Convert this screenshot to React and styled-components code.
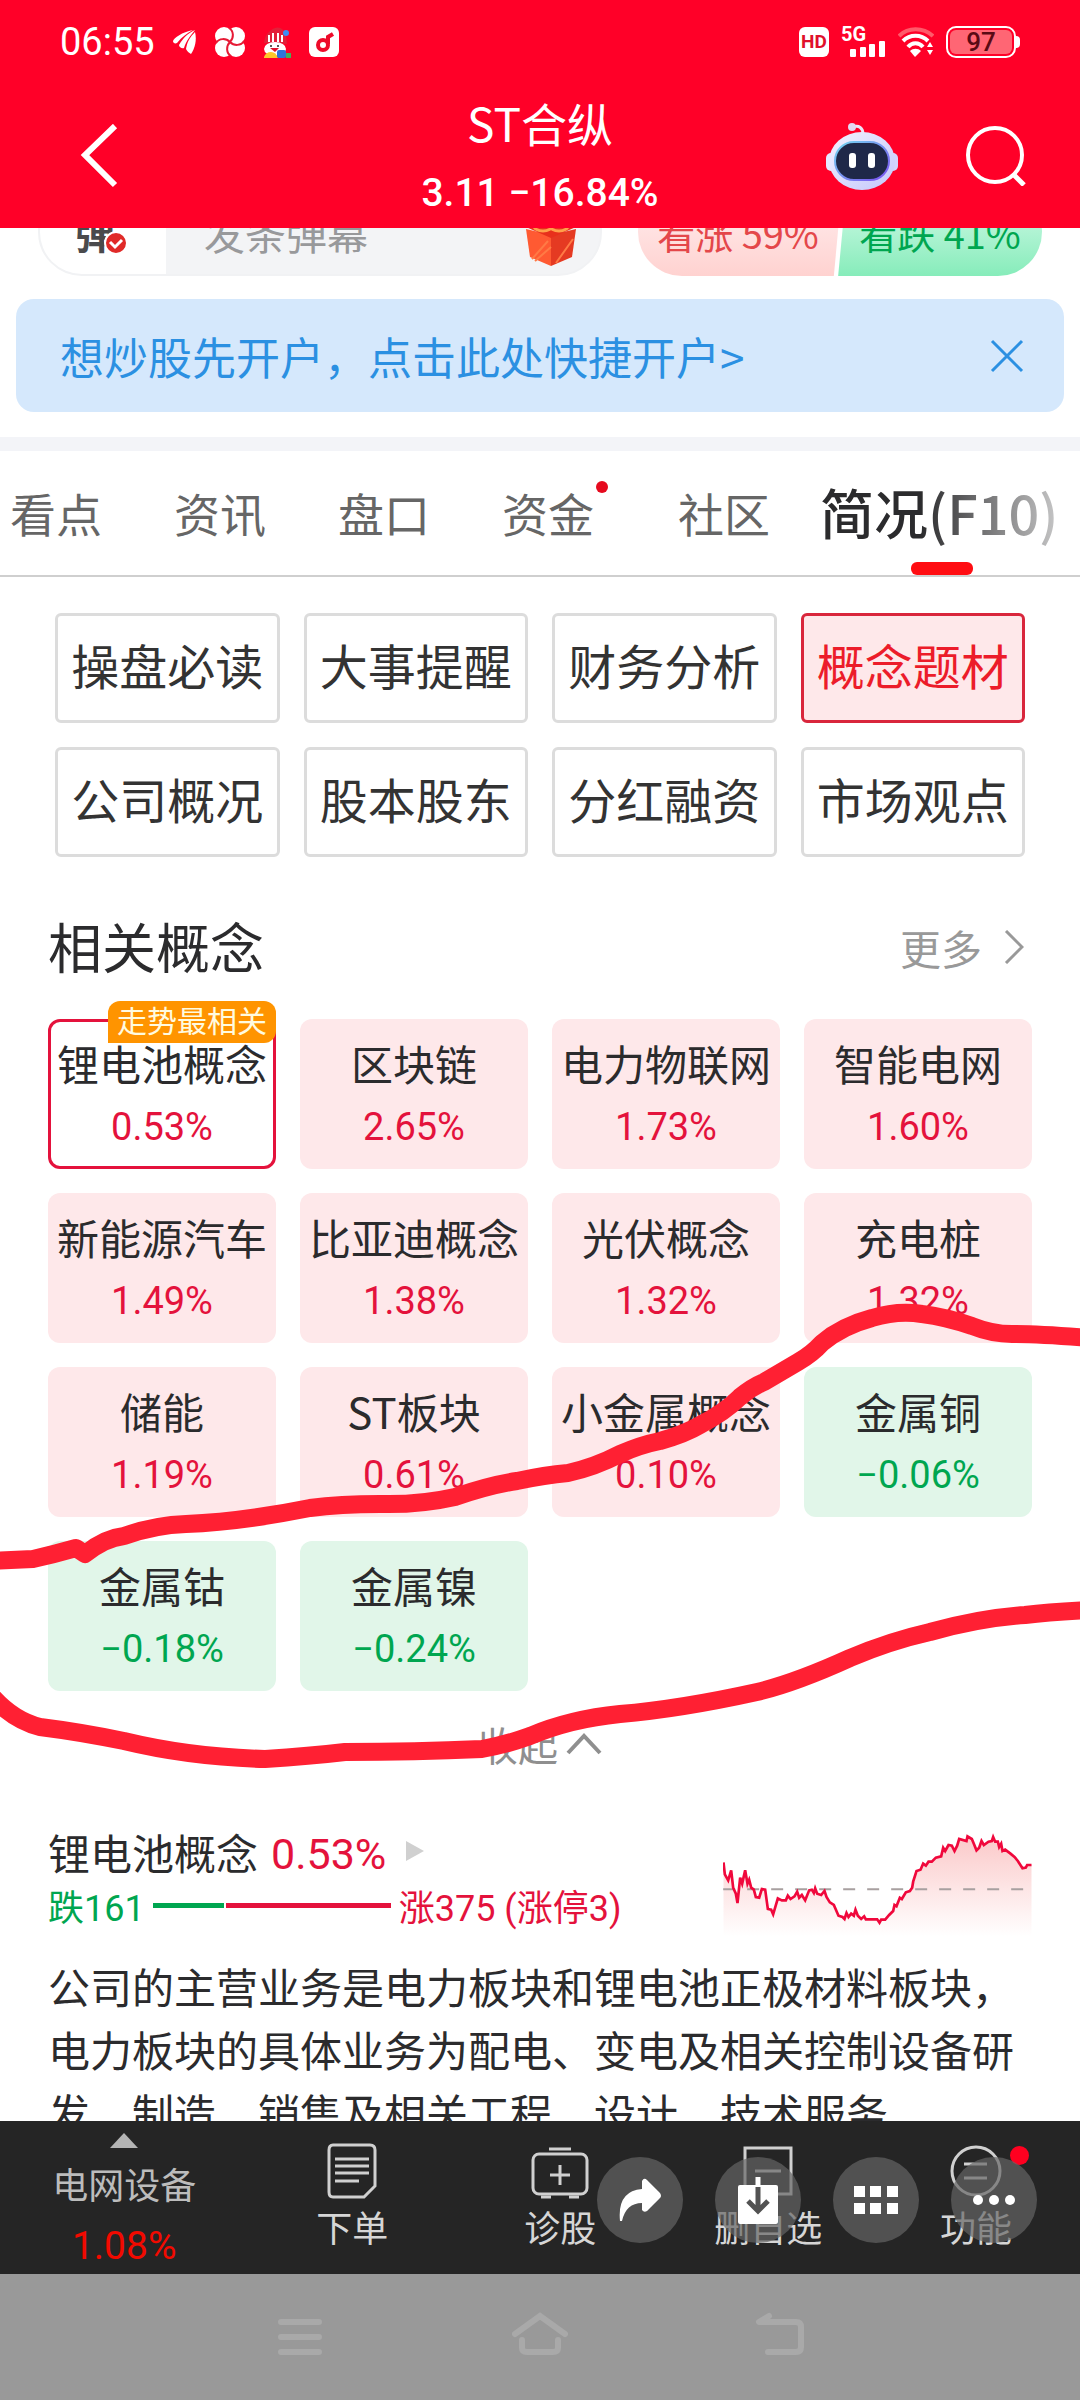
import styled, { createGlobalStyle, css } from "styled-components";

const GlobalStyle = createGlobalStyle`
  * {
    box-sizing: border-box;
  }

  body {
    margin: 0;
    background: #fff;
    color: #2b2b2d;
    font-family: "Noto Sans CJK SC", sans-serif;
  }

  button,
  input {
    margin: 0;
    padding: 0;
    border: 0;
    background: none;
    color: inherit;
    font: inherit;
  }

  a {
    color: inherit;
    text-decoration: none;
  }

  h1, h2, h3, p {
    margin: 0;
    font-weight: 400;
  }

  svg {
    display: block;
    flex: none;
  }
`;

const RED = "#e4123c";
const GREEN = "#00a650";

const Page = styled.div`
  display: flex;
  flex-direction: column;
  height: 100vh;
  overflow: hidden;
`;

/* ---------- header ---------- */

const Header = styled.header`
  flex: none;
  background: #ff0028;
  color: #fff;
`;

const StatusBar = styled.div`
  display: flex;
  align-items: center;
  justify-content: space-between;
  height: 84px;
  padding: 0 60px;

  .group {
    display: flex;
    align-items: center;
  }

  .left {
    gap: 18px;
  }

  .right {
    gap: 12px;
  }

  .time {
    font-family: Roboto, sans-serif;
    font-size: 38px;
    line-height: 40px;
  }

  .hd {
    width: 30px;
    height: 30px;
    border-radius: 6px;
    background: #fff;
    color: #e0102c;
    font: 700 19px/30px Roboto, sans-serif;
    text-align: center;
  }

  .signal {
    display: flex;
    flex-direction: column;
    width: 45px;
    height: 30px;
    font: 700 20px/14px Roboto, sans-serif;

    svg {
      align-self: flex-end;
    }
  }
`;

const Battery = styled.div`
  display: flex;
  align-items: center;

  .body {
    width: 70px;
    height: 32px;
    padding: 2px;
    border: 2px solid #fff;
    border-radius: 10px;
  }

  .level {
    height: 24px;
    border-radius: 6px;
    background: #ff6674;
    color: #5a0a14;
    font: 500 26px/24px Roboto, sans-serif;
    text-align: center;
  }

  .cap {
    width: 4px;
    height: 12px;
    border-radius: 0 4px 4px 0;
    background: #fff;
  }
`;

const TitleBar = styled.div`
  display: grid;
  grid-template-columns: 1fr auto 1fr;
  align-items: center;
  height: 144px;
  padding: 0 54px;

  button {
    display: block;
  }

  .back {
    padding-left: 26px;
  }

  .title {
    padding-top: 2px;
    text-align: center;
  }

  h1 {
    font-size: 46px;
    line-height: 72px;
  }

  .price {
    font-family: Roboto, sans-serif;
    font-weight: 500;
    font-size: 39px;
    line-height: 70px;
  }

  .actions {
    display: flex;
    justify-content: flex-end;
    align-items: center;
    gap: 68px;
  }
`;

/* ---------- scrolled content ---------- */

const Main = styled.main`
  position: relative;
  flex: 1;
  min-height: 0;
  overflow: hidden;
`;

const BulletRow = styled.div`
  display: flex;
  justify-content: space-between;
  height: 88px;
  margin-top: -40px;
  padding: 0 38px;
`;

const BulletBox = styled.div`
  display: flex;
  align-items: center;
  width: 564px;
  border: 2px solid #f1f2f4;
  border-radius: 44px;
  background: #f3f4f6;
  overflow: hidden;

  .switch {
    position: relative;
    width: 126px;
    height: 100%;
    padding-right: 16px;
    background: #fff;
    color: #4a4a4c;
    font-size: 40px;
    font-weight: 700;
  }

  .switch svg {
    position: absolute;
    left: 64px;
    bottom: 19px;
  }

  input {
    flex: 1;
    min-width: 0;
    padding-left: 38px;
    font-size: 41px;

    &::placeholder {
      color: #98999b;
      opacity: 1;
    }
  }

  .gift {
    margin-right: 24px;
  }
`;

const VoteBox = styled.div`
  display: flex;
  width: 404px;
  border-radius: 44px;
  overflow: hidden;
`;

const Vote = styled.button`
  width: 204px;
  padding-right: 4px;
  font-size: 38px;
  color: #e4474a;
  background: linear-gradient(#ffe4e4 40%, #ffd2d0);
  clip-path: polygon(0 0, 100% 0, 96% 100%, 0 100%);

  ${({ $down }) =>
    $down &&
    css`
      width: 208px;
      margin-left: -8px;
      padding: 0 0 0 4px;
      color: ${GREEN};
      background: linear-gradient(#b8f5d8 40%, #86ecba);
      clip-path: polygon(6% 0, 100% 0, 100% 100%, 2% 100%);
    `}
`;

const Banner = styled.div`
  display: flex;
  align-items: center;
  justify-content: space-between;
  height: 113px;
  margin: 23px 16px 25px;
  padding: 0 40px 0 44px;
  border-radius: 18px;
  background: #d5e8fc;
  color: #2b90e2;
  font-size: 44px;
`;

const Divider = styled.div`
  height: 14px;
  background: #f3f4f8;
`;

const Tabs = styled.nav`
  position: relative;
  display: flex;
  height: 126px;
  padding-left: 10px;
  border-bottom: 2px solid #cfcfcf;
  overflow: hidden;

  /* fade that hints at more tabs to the right */
  &::after {
    content: "";
    position: absolute;
    top: 0;
    right: 0;
    bottom: 20px;
    width: 160px;
    background: linear-gradient(90deg, rgba(255, 255, 255, 0), rgba(255, 255, 255, 0.85));
    pointer-events: none;
  }
`;

const Tab = styled.button`
  position: relative;
  flex: none;
  padding-right: ${({ $dot }) => ($dot ? 84 : 72)}px;
  padding-bottom: 3px;
  color: #666;
  font-size: 46px;
  white-space: nowrap;

  ${({ $dot }) =>
    $dot &&
    css`
      &::after {
        content: "";
        position: absolute;
        top: 30px;
        right: 70px;
        width: 12px;
        height: 12px;
        border-radius: 50%;
        background: #e60a1e;
      }
    `}

  ${({ $active }) =>
    $active &&
    css`
      margin-left: -22px;
      padding-right: 0;
      color: #2b2b2d;
      font-size: 54px;
      font-weight: 500;

      &::after {
        content: "";
        position: absolute;
        left: 50%;
        bottom: 0;
        width: 62px;
        height: 13px;
        margin-left: -28px;
        border-radius: 6px;
        background: #ff0d12;
      }
    `}
`;

const SubNav = styled.div`
  display: grid;
  grid-template-columns: repeat(4, 1fr);
  gap: 24px;
  padding: 36px 55px 0;
`;

const SubNavButton = styled.button`
  height: 110px;
  padding-bottom: 8px;
  border: 3px solid ${({ $active }) => ($active ? "#d9263c" : "#dcdcdc")};
  border-radius: 6px;
  background: ${({ $active }) => ($active ? "#fee8ea" : "#fff")};
  color: ${({ $active }) => ($active ? "#ec1c2a" : "#333")};
  font-size: 48px;
  white-space: nowrap;
`;

const SectionHead = styled.div`
  display: flex;
  align-items: center;
  justify-content: space-between;
  margin: 49px 0 33px;
  padding: 0 56px 0 48px;

  h2 {
    font-size: 54px;
    line-height: 80px;
  }

  a {
    display: flex;
    align-items: center;
    gap: 22px;
    padding-top: 2px;
    color: #999;
    font-size: 41px;
  }
`;

const ConceptGrid = styled.div`
  display: grid;
  grid-template-columns: repeat(4, 1fr);
  gap: 24px;
  padding: 0 48px;
`;

const Concept = styled.a`
  position: relative;
  display: flex;
  flex-direction: column;
  align-items: center;
  justify-content: center;
  height: 150px;
  padding-top: 4px;
  border-radius: 12px;
  background: ${({ $down }) => ($down ? "#e1f6e9" : "#fee8ea")};
  white-space: nowrap;

  ${({ $selected }) =>
    $selected &&
    css`
      border: 3px solid ${RED};
      background: #fff;
    `}

  .name {
    font-size: 42px;
    line-height: 62px;
  }

  .rate {
    color: ${({ $down }) => ($down ? GREEN : RED)};
    font-family: Roboto, sans-serif;
    font-size: 38px;
    line-height: 66px;
  }

  .badge {
    position: absolute;
    top: -21px;
    right: -3px;
    padding: 0 9px 6px;
    border-radius: 12px 12px 12px 0;
    background: #ff9400;
    color: #fffbe0;
    font-size: 30px;
    line-height: 36px;
  }
`;

const Collapse = styled.button`
  display: flex;
  align-items: center;
  gap: 8px;
  height: 56px;
  margin: 25px auto 0;
  color: #8f8f8f;
  font-size: 40px;
`;

const Detail = styled.section`
  padding: 50px 48px 0;

  .head {
    display: flex;
    justify-content: space-between;
    height: 115px;
  }

  .chart {
    margin-top: 10px;
  }

  p {
    margin-top: 17px;
    font-size: 42px;
    line-height: 63px;
  }
`;

const DetailTitle = styled.div`
  display: flex;
  align-items: center;
  height: 58px;

  h3 {
    font-size: 42px;
  }

  .rate {
    margin: 0 20px 0 13px;
    padding-top: 6px;
    color: ${RED};
    font-family: Roboto, sans-serif;
    font-size: 43px;
  }
`;

const Counts = styled.div`
  display: flex;
  align-items: center;
  gap: 8px;
  height: 50px;
  color: ${RED};
  font-family: Roboto, "Noto Sans CJK SC", sans-serif;
  font-size: 36px;

  .down {
    color: ${GREEN};
  }

  .bar {
    display: flex;
    gap: 2px;
    width: 238px;
    height: 5px;
  }

  .bar i {
    background: ${RED};
  }

  .bar .fall {
    background: ${GREEN};
  }
`;

const Scribble = styled.svg`
  position: absolute;
  left: 0;
  top: 1072px;
  width: 100%;
  height: 480px;
  pointer-events: none;
`;

/* ---------- bottom ---------- */

const TabBar = styled.div`
  position: relative;
  display: flex;
  flex: none;
  height: 153px;
  background: #252525;
  color: #d6d6d6;
`;

const Sector = styled.button`
  display: flex;
  flex-direction: column;
  align-items: center;
  width: 23%;
  padding-top: 12px;
  color: #bcbcbc;
  font-size: 36px;
  line-height: 70px;

  .rate {
    color: #f20a00;
    font-family: Roboto, sans-serif;
    font-size: 39px;
    line-height: 56px;
  }
`;

const TabItem = styled.button`
  display: flex;
  flex: 1;
  flex-direction: column;
  align-items: center;
  padding-top: 22px;
  font-size: 36px;
  line-height: 54px;

  .icon {
    position: relative;
  }

  .dot {
    position: absolute;
    top: 3px;
    right: -26px;
    width: 19px;
    height: 19px;
    border-radius: 50%;
    background: #ff0020;
  }
`;

const FloatBar = styled.div`
  position: absolute;
  right: 43px;
  bottom: 31px;
  display: flex;
  gap: 32px;
`;

const FloatButton = styled.button`
  display: flex;
  align-items: center;
  justify-content: center;
  width: 86px;
  height: 86px;
  border-radius: 50%;
  background: rgba(102, 102, 102, 0.69);
`;

const SystemNav = styled.div`
  display: flex;
  flex: none;
  align-items: center;
  justify-content: center;
  gap: 184px;
  height: 126px;
  padding-bottom: 6px;
  background: #999;
`;

const subNav = [
  "操盘必读",
  "大事提醒",
  "财务分析",
  "概念题材",
  "公司概况",
  "股本股东",
  "分红融资",
  "市场观点",
];

const concepts = [
  { name: "锂电池概念", rate: "0.53%", badge: "走势最相关" },
  { name: "区块链", rate: "2.65%" },
  { name: "电力物联网", rate: "1.73%" },
  { name: "智能电网", rate: "1.60%" },
  { name: "新能源汽车", rate: "1.49%" },
  { name: "比亚迪概念", rate: "1.38%" },
  { name: "光伏概念", rate: "1.32%" },
  { name: "充电桩", rate: "1.32%" },
  { name: "储能", rate: "1.19%" },
  { name: "ST板块", rate: "0.61%" },
  { name: "小金属概念", rate: "0.10%" },
  { name: "金属铜", rate: "−0.06%", down: true },
  { name: "金属钴", rate: "−0.18%", down: true },
  { name: "金属镍", rate: "−0.24%", down: true },
];

const counts = { down: 161, up: 375, limit: 3 };

const trend =
  "M131 186L135 222L145 240L154 210L160 262L168 280L173 308L181 232L187 250L196 210L203 250L208 238L214 262L222 268L228 290L238 292L246 266L256 268L264 326L274 328L280 342L294 294L306 300L318 300L324 286L332 296L344 288L352 274L358 292L366 284L376 300L388 270L396 268L402 278L406 264L412 280L424 284L434 272L440 290L450 306L462 314L476 346L488 350L494 356L500 338L506 350L514 340L522 346L527 328L534 346L544 356L553 348L558 357L592 357L599 367L604 358L616 358L628 344L640 332L644 314L650 318L660 292L666 296L678 276L690 272L697 262L700 244L710 212L722 208L730 190L738 196L746 184L756 184L768 172L784 168L790 142L796 152L806 134L816 136L824 152L832 136L838 116L860 122L863 108L876 116L882 130L890 150L898 142L905 122L912 134L926 124L936 122L940 110L946 124L954 124L958 140L964 130L968 152L976 148L992 160L1004 170L1014 182L1028 204L1038 202L1042 194L1055 194";

const StatusIcons = () => (
  <>
    <svg width="24" height="26" viewBox="0 0 24 26" fill="#fff">
      <path d="M0 12C1 9 9 3 20 1C14 4 9 8 4 14C2 15 0 14 0 12Z" />
      <path d="M6 16C10 9 15 4 22 1C18 6 13 12 11 19C9 20 6 18 6 16Z" />
      <path d="M13 20C14 13 17 8 22 3C24 11 22 19 18 25C16 24 14 22 13 20Z" />
    </svg>
    <svg width="30" height="30" viewBox="0 0 30 30">
      <g fill="#fff">
        <circle cx="9" cy="9" r="9" />
        <circle cx="21" cy="9" r="9" />
        <circle cx="9" cy="21" r="9" />
        <circle cx="21" cy="21" r="9" />
      </g>
      <path
        d="M15 15C19 11 19 4 14 1M15 15C19 19 26 19 29 14M15 15C11 19 11 26 16 29M15 15C11 11 4 11 1 16"
        fill="none"
        stroke="#e61a35"
        strokeWidth="2"
      />
    </svg>
    <svg width="28" height="32" viewBox="0 0 28 32">
      <path d="M1 17C2 8 7 4 12 2C16 0 22 3 23 10L24 18Z" fill="#e2203a" />
      <path d="M6 9V16M10 7V16M15 7V16M19 9V16" stroke="#fff" strokeWidth="2" />
      <circle cx="23" cy="7" r="3" fill="#3d8df5" />
      <ellipse cx="12" cy="23" rx="11" ry="7" fill="#fff" />
      <circle cx="8" cy="20" r="1" fill="#222" />
      <circle cx="15" cy="20" r="1" fill="#222" />
      <path d="M7 22H16L12 26Z" fill="#e0102c" />
      <path d="M1 31Q3 26 8 26T15 32H1Z" fill="#ffc62b" />
      <rect x="14" y="24" width="9" height="8" rx="2" fill="#2f74d8" />
      <rect x="23" y="27" width="5" height="5" fill="#42b05a" />
    </svg>
    <svg width="30" height="30" viewBox="0 0 30 30">
      <rect width="30" height="30" rx="6" fill="#fff" />
      <circle cx="14" cy="18" r="5" fill="none" stroke="#ee0a2a" strokeWidth="4" />
      <path d="M19 17V10L24 7" fill="none" stroke="#ee0a2a" strokeWidth="4" />
    </svg>
  </>
);

const Robot = () => (
  <svg width="72" height="68" viewBox="0 0 72 68">
    <defs>
      <linearGradient id="shell" x1="0" y1="0" x2="1" y2="1">
        <stop offset="0" stopColor="#f4f2ff" />
        <stop offset="1" stopColor="#c3c6fb" />
      </linearGradient>
      <linearGradient id="rim" x1="0" y1="0" x2="1" y2="1">
        <stop offset="0" stopColor="#74d8f0" />
        <stop offset="1" stopColor="#7a4df0" />
      </linearGradient>
    </defs>
    <path d="M27 5C33 3 37 6 37 12" fill="none" stroke="#ece6f8" strokeWidth="3" />
    <circle cx="26" cy="5" r="4" fill="#e3d9f2" />
    <rect x="0" y="31" width="12" height="18" rx="5" fill="#e6e8ff" />
    <rect x="60" y="31" width="12" height="18" rx="5" fill="#d3d3fd" />
    <ellipse cx="36" cy="39" rx="33" ry="29" fill="url(#shell)" />
    <rect x="9" y="20" width="54" height="38" rx="19" fill="#1f2849" stroke="url(#rim)" strokeWidth="2" />
    <rect x="23" y="31" width="7" height="15" rx="3" fill="#fff" />
    <rect x="42" y="31" width="7" height="15" rx="3" fill="#fff" />
  </svg>
);

const Gift = () => (
  <svg className="gift" width="50" height="70" viewBox="0 0 50 70">
    <path d="M0 32L25 38V69L4 60Z" fill="#ff5a32" />
    <path d="M50 32L25 38V69L46 60Z" fill="#e53a22" />
    <path d="M0 30L25 22L50 30L25 41Z" fill="#e8301c" />
    <path d="M6 62L22 44M9 64L25 50M30 66L47 42" stroke="#ff7a45" strokeWidth="2" />
    <ellipse cx="17" cy="29" rx="9" ry="5" fill="none" stroke="#ffa04a" strokeWidth="3" />
    <ellipse cx="33" cy="29" rx="9" ry="5" fill="none" stroke="#ffa04a" strokeWidth="3" />
  </svg>
);

const App = () => {
  const total = counts.down + counts.up;

  return (
    <Page>
      <GlobalStyle />
      <Header>
        <StatusBar>
          <div className="group left">
            <span className="time">06:55</span>
            <StatusIcons />
          </div>
          <div className="group right">
            <span className="hd">HD</span>
            <span className="signal">
              5G
              <svg width="36" height="16" viewBox="0 0 36 16" fill="#fff">
                <rect x="0" y="8" width="6" height="8" rx="1" />
                <rect x="10" y="6" width="6" height="10" rx="1" />
                <rect x="19" y="3" width="6" height="13" rx="1" />
                <rect x="29" y="0" width="6" height="16" rx="1" />
              </svg>
            </span>
            <svg width="36" height="30" viewBox="0 0 36 30" fill="none" strokeWidth="4">
              <path d="M1 9C10 0 25 0 35 9" stroke="#ff5a6a" />
              <path d="M5 14C12 7 23 7 30 14" stroke="#fff" />
              <path d="M10 20C14 15 21 15 25 20" stroke="#fff" />
              <path d="M12 24C15 21 20 21 23 24L17 30Z" fill="#fff" />
              <path d="M29 20L32 15L35 20ZM29 23L32 28L35 23Z" fill="#fff" />
            </svg>
            <Battery>
              <div className="body">
                <div className="level">97</div>
              </div>
              <div className="cap" />
            </Battery>
          </div>
        </StatusBar>
        <TitleBar>
          <div className="back">
            <button aria-label="返回">
              <svg width="38" height="64" viewBox="0 0 38 64" fill="none" stroke="#fff" strokeWidth="6">
                <path d="M35 2L5 31L35 61" />
              </svg>
            </button>
          </div>
          <div className="title">
            <h1>ST合纵</h1>
            <div className="price">3.11 −16.84%</div>
          </div>
          <div className="actions">
            <button aria-label="智能助手">
              <Robot />
            </button>
            <button aria-label="搜索">
              <svg width="60" height="60" viewBox="0 0 60 60" fill="none" stroke="#fff" strokeWidth="4">
                <circle cx="29" cy="29" r="27" />
                <path d="M47 48L58 59" strokeWidth="5" />
              </svg>
            </button>
          </div>
        </TitleBar>
      </Header>

      <Main>
        <BulletRow>
          <BulletBox>
            <button className="switch">
              弹
              <svg width="24" height="24" viewBox="0 0 24 24">
                <circle cx="12" cy="12" r="11" fill="#e02a28" stroke="#fff" strokeWidth="2" />
                <path d="M6 11L11 16L18 9" fill="none" stroke="#fff" strokeWidth="3" />
              </svg>
            </button>
            <input placeholder="发条弹幕" aria-label="发条弹幕" />
            <Gift />
          </BulletBox>
          <VoteBox>
            <Vote>看涨 59%</Vote>
            <Vote $down>看跌 41%</Vote>
          </VoteBox>
        </BulletRow>

        <Banner>
          <a href="#open">想炒股先开户，点击此处快捷开户&gt;</a>
          <button aria-label="关闭">
            <svg width="34" height="34" viewBox="0 0 34 34" stroke="#2b90e2" strokeWidth="3">
              <path d="M2 2L32 32M32 2L2 32" />
            </svg>
          </button>
        </Banner>
        <Divider />

        <Tabs>
          <Tab>看点</Tab>
          <Tab>资讯</Tab>
          <Tab>盘口</Tab>
          <Tab $dot>资金</Tab>
          <Tab>社区</Tab>
          <Tab $active>简况(F10)</Tab>
        </Tabs>

        <SubNav>
          {subNav.map((label) => (
            <SubNavButton key={label} $active={label === "概念题材"}>
              {label}
            </SubNavButton>
          ))}
        </SubNav>

        <SectionHead>
          <h2>相关概念</h2>
          <a href="#more">
            更多
            <svg width="20" height="34" viewBox="0 0 20 34" fill="none" stroke="#999" strokeWidth="3">
              <path d="M2 1L18 17L2 33" />
            </svg>
          </a>
        </SectionHead>

        <ConceptGrid>
          {concepts.map(({ name, rate, down, badge }) => (
            <Concept key={name} href="#concept" $down={down} $selected={!!badge}>
              <span className="name">{name}</span>
              <span className="rate">{rate}</span>
              {badge && <span className="badge">{badge}</span>}
            </Concept>
          ))}
        </ConceptGrid>

        <Collapse>
          收起
          <svg width="36" height="22" viewBox="0 0 36 22" fill="none" stroke="#8f8f8f" strokeWidth="4">
            <path d="M2 20L18 3L34 20" />
          </svg>
        </Collapse>

        <Detail>
          <div className="head">
            <div>
              <DetailTitle>
                <h3>锂电池概念</h3>
                <span className="rate">0.53%</span>
                <svg width="18" height="20" viewBox="0 0 18 20" fill="#d0d0d0">
                  <path d="M0 0L18 10L0 20Z" />
                </svg>
              </DetailTitle>
              <Counts>
                <span className="down">跌{counts.down}</span>
                <span className="bar">
                  <i className="fall" style={{ flexGrow: counts.down / total }} />
                  <i style={{ flexGrow: counts.up / total }} />
                </span>
                <span>
                  涨{counts.up} (涨停{counts.limit})
                </span>
              </Counts>
            </div>
            <svg className="chart" width="309" height="105" viewBox="130 95 926 315">
              <defs>
                <linearGradient id="area" x1="0" y1="0" x2="0" y2="1">
                  <stop offset="0" stopColor="#fbc9c9" />
                  <stop offset="1" stopColor="#fff" />
                </linearGradient>
              </defs>
              <path d={`${trend}V408H131Z`} fill="url(#area)" />
              <path d="M130 267H1032" stroke="#a8a0a0" strokeWidth="6" strokeDasharray="36 36" />
              <path d={trend} fill="none" stroke="#f0083c" strokeWidth="8" />
            </svg>
          </div>
          <p>
            公司的主营业务是电力板块和锂电池正极材料板块，电力板块的具体业务为配电、变电及相关控制设备研发、制造、销售及相关工程、设计、技术服务
          </p>
        </Detail>

        <Scribble
          viewBox="0 1300 1080 480"
          preserveAspectRatio="none"
          fill="none"
          stroke="#ff2033"
          strokeWidth="18"
          strokeLinejoin="round"
        >
          <path d="M-10 1561L33 1559Q55 1554 76 1548L85 1554Q105 1538 124 1536Q155 1525 186 1524Q240 1522 310 1508Q340 1504 380 1504Q420 1505 455 1497Q490 1485 517 1481Q545 1475 568 1473Q595 1467 620 1454Q640 1445 660 1441Q685 1434 700 1425Q725 1412 740 1397Q752 1387 764 1382L798 1362Q812 1354 822 1343Q842 1326 872 1318Q898 1310 922 1314Q946 1317 972 1326Q992 1334 1012 1334Q1040 1334 1090 1338" />
          <path d="M-10 1694Q12 1720 40 1727Q80 1732 124 1741Q190 1757 265 1759Q310 1756 345 1752Q415 1752 482 1749Q505 1745 530 1736Q570 1719 620 1714Q680 1709 757 1692Q795 1683 850 1658Q890 1641 930 1632Q980 1618 1025 1615Q1050 1612 1090 1610" />
        </Scribble>
      </Main>

      <TabBar>
        <Sector>
          <svg width="28" height="15" viewBox="0 0 28 15" fill="#b4b4b4">
            <path d="M0 15L14 0L28 15Z" />
          </svg>
          <span>电网设备</span>
          <span className="rate">1.08%</span>
        </Sector>
        <TabItem>
          <svg width="50" height="56" viewBox="0 0 50 56" fill="none" stroke="#d0d0d0" strokeWidth="3">
            <path d="M6 2H43Q48 2 48 7V43L37 54H6Q2 54 2 49V7Q2 2 6 2Z" />
            <path d="M8 16H42M8 23H42M8 30H42M8 38H32" />
          </svg>
          下单
        </TabItem>
        <TabItem>
          <svg width="58" height="56" viewBox="0 0 58 56" fill="none" stroke="#d0d0d0" strokeWidth="3">
            <rect x="2" y="11" width="54" height="40" rx="6" />
            <path d="M18 6H40M29 22V42M19 32H39M10 54H20M38 54H48" />
          </svg>
          诊股
        </TabItem>
        <TabItem>
          <svg width="50" height="56" viewBox="0 0 50 56" fill="none" stroke="#d0d0d0" strokeWidth="3">
            <rect x="2" y="5" width="46" height="46" />
            <path d="M12 28H38" />
          </svg>
          删自选
        </TabItem>
        <TabItem>
          <span className="icon">
            <svg width="54" height="56" viewBox="0 0 54 56" fill="none" stroke="#d0d0d0" strokeWidth="3">
              <circle cx="27" cy="28" r="24" />
              <path d="M15 21H38M15 35H38" />
            </svg>
            <i className="dot" />
          </span>
          功能
        </TabItem>

        <FloatBar>
          <FloatButton aria-label="分享">
            <svg width="44" height="44" viewBox="0 0 44 44" fill="#fff">
              <path d="M24 3Q26 -1 29 2L42 15Q44 18 42 20L29 33Q26 35 24 32V25Q8 25 4 43H2Q-1 13 24 11Z" />
            </svg>
          </FloatButton>
          <FloatButton aria-label="保存">
            <svg width="40" height="48" viewBox="0 0 40 48">
              <rect x="0" y="9" width="40" height="39" rx="2" fill="#fff" />
              <path d="M20 1V11" stroke="#fff" strokeWidth="5" />
              <path d="M20 11V34M10 25L20 35L30 25" fill="none" stroke="#525252" strokeWidth="5" />
            </svg>
          </FloatButton>
          <FloatButton aria-label="应用">
            <svg width="44" height="28" viewBox="0 0 44 28" fill="#fff">
              <path d="M0 0H11V11H0ZM16 0H27V11H16ZM33 0H44V11H33ZM0 17H11V28H0ZM16 17H27V28H16ZM33 17H44V28H33Z" />
            </svg>
          </FloatButton>
          <FloatButton aria-label="更多操作">
            <svg width="42" height="10" viewBox="0 0 42 10" fill="#fff">
              <circle cx="5" cy="5" r="5" />
              <circle cx="21" cy="5" r="5" />
              <circle cx="37" cy="5" r="5" />
            </svg>
          </FloatButton>
        </FloatBar>
      </TabBar>

      <SystemNav>
        <button aria-label="菜单">
          <svg width="56" height="44" viewBox="0 0 56 44" stroke="#a9a9a9" strokeWidth="6" strokeLinecap="round">
            <path d="M9 10H47M9 25H47M9 40H47" />
          </svg>
        </button>
        <button aria-label="主页">
          <svg width="56" height="44" viewBox="0 0 56 44" fill="none" stroke="#a9a9a9" strokeWidth="6" strokeLinecap="round">
            <path d="M3 22L28 4L53 22M10 28V36Q10 40 15 40H41Q46 40 46 36V28" />
          </svg>
        </button>
        <button aria-label="后退">
          <svg width="56" height="44" viewBox="0 0 56 44" fill="none" stroke="#a9a9a9" strokeWidth="6" strokeLinecap="round" strokeLinejoin="round">
            <path d="M17 4L7 10H44Q49 10 49 15V35Q49 40 44 40H16" />
          </svg>
        </button>
      </SystemNav>
    </Page>
  );
};

export default App;
